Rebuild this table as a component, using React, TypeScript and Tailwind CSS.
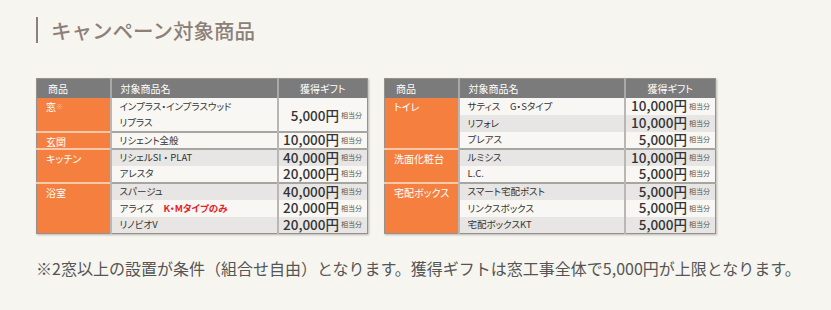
import React from "react";

type Item = { name: React.ReactNode; gift?: string; span?: number };
type Group = { label: React.ReactNode; items: Item[] };

const left: Group[] = [
  {
    label: (
      <>
        窓<span className="text-[7px] align-top text-[#fbc7a6]">※</span>
      </>
    ),
    items: [
      { name: "インプラス・インプラスウッド", gift: "5,000", span: 2 },
      { name: "リプラス" },
    ],
  },
  { label: "玄関", items: [{ name: "リシェント全般", gift: "10,000" }] },
  {
    label: "キッチン",
    items: [
      { name: "リシェルSI ・ PLAT", gift: "40,000" },
      { name: "アレスタ", gift: "20,000" },
    ],
  },
  {
    label: "浴室",
    items: [
      { name: "スパージュ", gift: "40,000" },
      {
        name: (
          <>
            アライズ<span className="ml-[10px] font-bold text-[#e8202a]">K・Mタイプのみ</span>
          </>
        ),
        gift: "20,000",
      },
      { name: "リノビオV", gift: "20,000" },
    ],
  },
];

const right: Group[] = [
  {
    label: "トイレ",
    items: [
      { name: "サティス　G・Sタイプ", gift: "10,000" },
      { name: "リフォレ", gift: "10,000" },
      { name: "プレアス", gift: "5,000" },
    ],
  },
  {
    label: "洗面化粧台",
    items: [
      { name: "ルミシス", gift: "10,000" },
      { name: "L.C.", gift: "5,000" },
    ],
  },
  {
    label: "宅配ボックス",
    items: [
      { name: "スマート宅配ポスト", gift: "5,000" },
      { name: "リンクスボックス", gift: "5,000" },
      { name: "宅配ボックスKT", gift: "5,000" },
    ],
  },
];

function Gift({ value }: { value: string }) {
  return (
    <div className="flex items-center justify-end pr-[5px] leading-none">
      <span className="text-[13.5px] font-medium text-[#333]">{value}円</span>
      <span className="ml-[2px] text-[7px] text-[#555]">相当分</span>
    </div>
  );
}

function GiftTable({ groups, nameW, giftW }: { groups: Group[]; nameW: number; giftW: number }) {
  let row = 0;
  return (
    <table className="w-[331px] table-fixed border-collapse border border-[#96918c] shadow-[1px_1px_2px_rgba(0,0,0,0.25)] [font-feature-settings:'palt']">
      <colgroup>
        <col className="w-[74px]" />
        <col style={{ width: nameW }} />
        <col style={{ width: giftW }} />
      </colgroup>
      <thead>
        <tr className="h-[19px] bg-[#7b7b7b] text-[10px] leading-[13px] text-white">
          <th className="pl-[11px] text-left font-normal">商品</th>
          <th className="border-l-2 border-[#a9a9a9] pl-[9px] text-left font-normal">対象商品名</th>
          <th className="border-l-2 border-[#a9a9a9] text-center font-normal">獲得ギフト</th>
        </tr>
      </thead>
      <tbody>
        {groups.map((g, gi) =>
          g.items.map((it, ii) => {
            const idx = row++;
            const plain = gi === 0 && ii === 1 && groups === left;
            const bg = idx % 2 === 1 && !plain ? "bg-[#e7e6e4]" : "bg-[#f8f7f3]";
            const top = gi > 0 && ii === 0;
            return (
              <tr key={`${gi}-${ii}`} className="h-[17px]">
                {ii === 0 && (
                  <td
                    rowSpan={g.items.length}
                    className={`bg-[#f47f3e] pl-[9px] pt-[2px] align-top text-[10px] leading-[13px] text-white ${
                      top ? "border-t-2 border-[#f8c8a8]" : ""
                    }`}
                  >
                    {g.label}
                  </td>
                )}
                <td
                  className={`${bg} border-l-2 border-[#b9b7b4] pl-[8px] text-[9.5px] leading-[13px] text-[#333] ${
                    top ? "border-t-2 border-t-[#a7a5a2]" : ""
                  }`}
                >
                  {it.name}
                </td>
                {it.gift && (
                  <td
                    rowSpan={it.span ?? 1}
                    className={`${bg} border-l-2 border-[#b9b7b4] ${top ? "border-t-2 border-t-[#a7a5a2]" : ""}`}
                  >
                    <div className={it.span ? "pt-[3px]" : ""}>
                      <Gift value={it.gift} />
                    </div>
                  </td>
                )}
              </tr>
            );
          })
        )}
      </tbody>
    </table>
  );
}

export default function App() {
  return (
    <div
      className="min-h-[310px] w-[831px] bg-[#f7f5f0] pl-[36px] pt-[17px]"
      style={{ fontFamily: '"Noto Sans CJK JP", "Noto Sans", sans-serif' }}
    >
      <div className="flex h-[26px] items-center">
        <div className="h-[26px] w-[2px] bg-[#8c8078]" />
        <h1 className="ml-[13px] text-[20.5px] font-medium leading-none text-[#8c8078]">キャンペーン対象商品</h1>
      </div>
      <div className="mt-[35px] flex gap-[16px]">
        <GiftTable groups={left} nameW={167} giftW={90} />
        <GiftTable groups={right} nameW={166} giftW={91} />
      </div>
      <p className="mt-[24px] text-[16px] leading-[20px] text-[#555]">
        ※2窓以上の設置が条件（組合せ自由）となります。獲得ギフトは窓工事全体で5,000円が上限となります。
      </p>
    </div>
  );
}
